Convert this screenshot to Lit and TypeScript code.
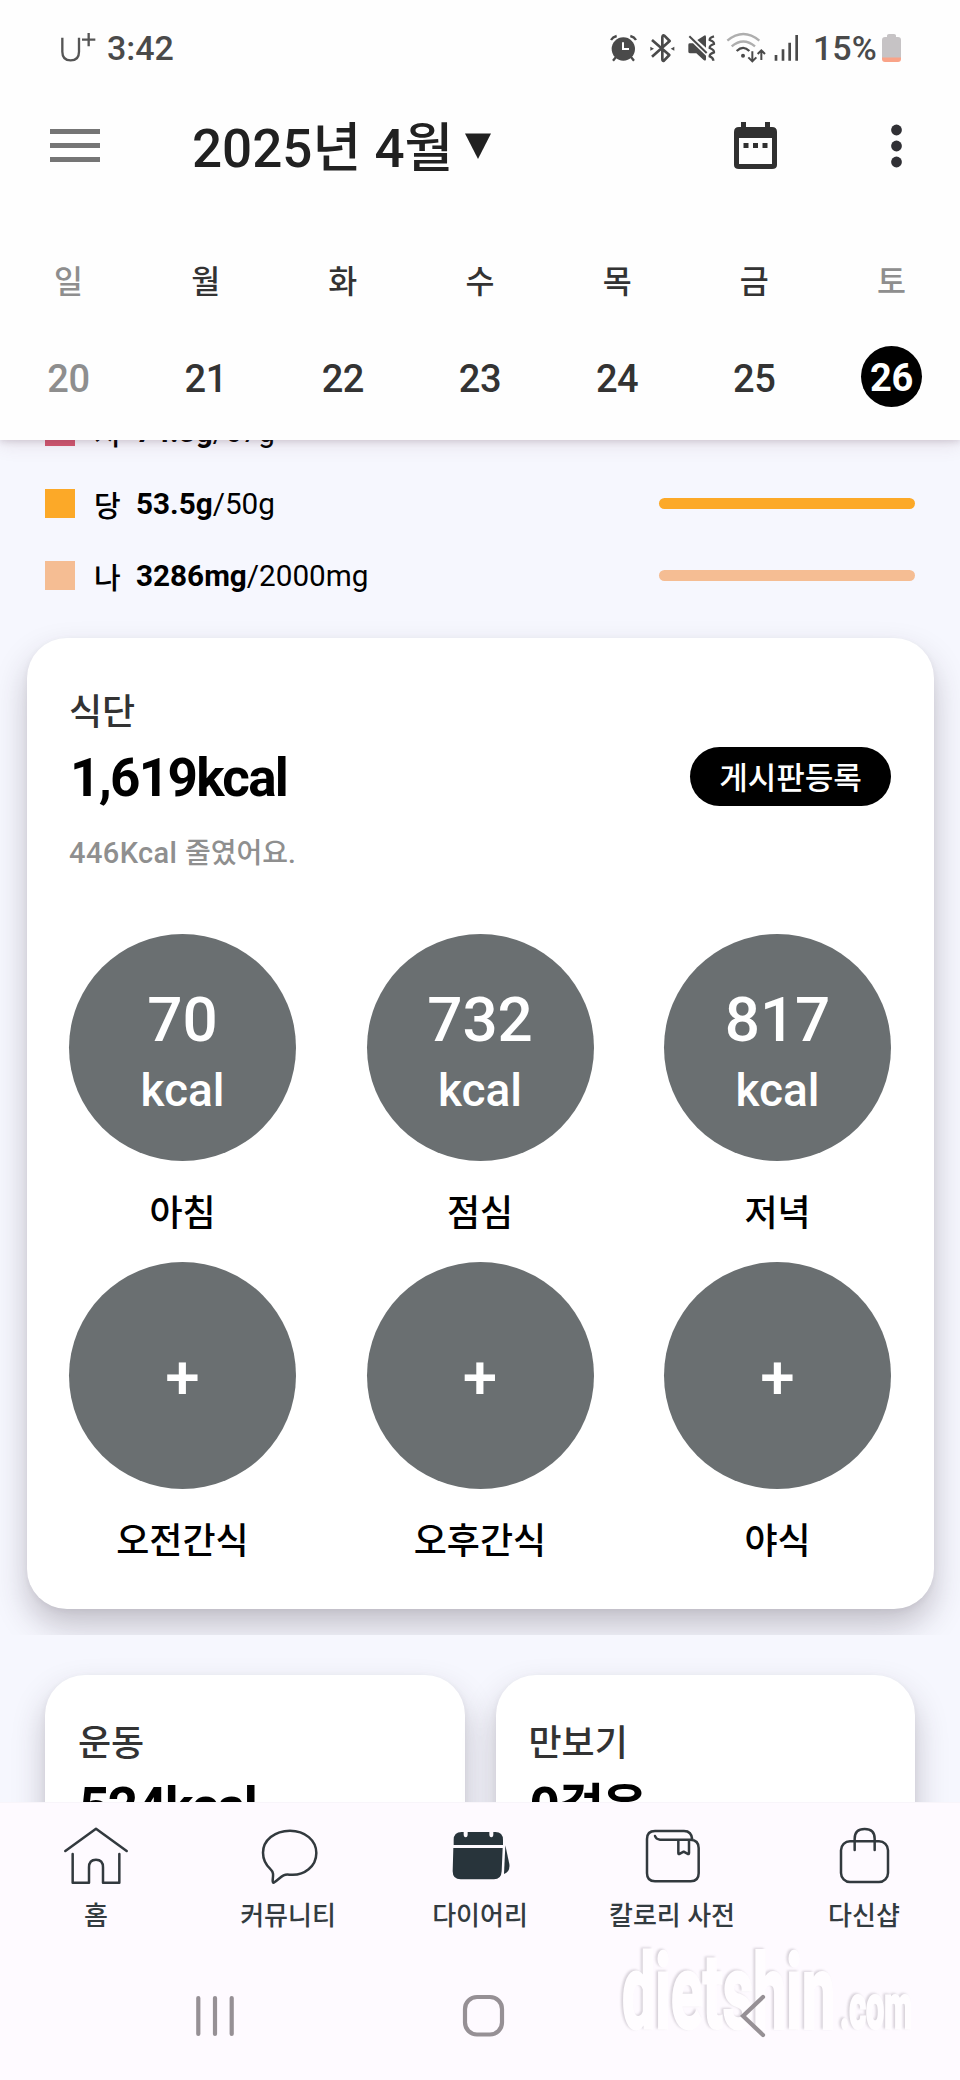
import { LitElement, html, svg, css } from "lit";
import { customElement } from "lit/decorators.js";
import { classMap } from "lit/directives/class-map.js";

interface Day { name: string; date: number; state?: string }
interface Nutrient { key: string; label: string; value: string; goal: string }
interface Meal { label: string; kcal?: number }

const DAYS: Day[] = [
  { name: "일", date: 20, state: "muted" },
  { name: "월", date: 21 },
  { name: "화", date: 22 },
  { name: "수", date: 23 },
  { name: "목", date: 24 },
  { name: "금", date: 25 },
  { name: "토", date: 26, state: "today" },
];

const NUTRIENTS: Nutrient[] = [
  { key: "fat", label: "지", value: "74.3g", goal: "/67g" },
  { key: "sugar", label: "당", value: "53.5g", goal: "/50g" },
  { key: "sodium", label: "나", value: "3286mg", goal: "/2000mg" },
];

const MEALS: Meal[] = [
  { label: "아침", kcal: 70 },
  { label: "점심", kcal: 732 },
  { label: "저녁", kcal: 817 },
  { label: "오전간식" },
  { label: "오후간식" },
  { label: "야식" },
];

const TABS = [
  {
    label: "홈",
    box: "192 132 192 186",
    art: svg`<path d="M196 213 288 146 380 213M218 222V308H267V262Q267 239 288 239T309 262V308H358V222"/>`,
  },
  {
    label: "커뮤니티",
    box: "768 132 192 186",
    art: svg`<path d="M870 152C915 152 949 181 949 219C949 258 914 289 868 284C848 281 842 294 823 307C819 310 818 306 818 301C820 285 821 276 812 268C797 254 789 240 789 218C789 181 824 152 870 152Z"/>`,
  },
  {
    label: "다이어리",
    box: "-96 132 192 186",
    art: svg`<g class="solid"><path d="M-79 195V180Q-79 156 -55 156H-49V163Q-49 172 -43 172T-37 163V156H28V163Q28 172 34 172T40 163V156H46Q69 156 69 180V195Z"/><path d="M-80 204H68L65 274Q64 298 42 298H-58Q-82 298 -82 274Z"/><path d="M76 196 88 252Q91 275 72 282Z"/></g>`,
  },
  {
    label: "칼로리 사전",
    box: "480 132 192 186",
    art: svg`<path d="M525 168Q528 178 540 179H631Q656 180 656 204V280Q656 304 632 304H525Q501 304 501 280V177Q501 153 525 153H612Q635 153 637 179M595 180V219Q595 224 600 221L611 215L622 221Q627 224 627 219V180"/>`,
  },
  {
    label: "다신샵",
    box: "1056 132 192 186",
    art: svg`<rect x="1083" y="184" width="141" height="122" rx="27"/><path d="M1124 210V176Q1124 147 1154 147T1184 176V210"/>`,
  },
];

@customElement("app-root")
export class AppRoot extends LitElement {
  static styles = css`
    :host {
      display: flex;
      flex-direction: column;
      width: 960px;
      height: 2080px;
      overflow: hidden;
      background: #f6f7fe;
      color: #000;
      font-family: Roboto, "Noto Sans CJK KR", sans-serif;
      font-weight: 500;
    }
    * { box-sizing: border-box; }
    svg { display: block; flex: none; }
    .header {
      position: relative;
      z-index: 2;
      flex: none;
      height: 440px;
      background: #fefefe;
      box-shadow: 0 2px 6px rgba(90, 60, 80, 0.16), 0 4px 18px rgba(120, 70, 90, 0.14);
    }
    .status {
      display: flex;
      align-items: center;
      height: 96px;
      padding: 0 59px 0 60px;
      color: #4a4a4a;
      font-size: 34px;
      line-height: 96px;
    }
    .carrier { margin-right: 10px; }
    .clock { flex: 1; }
    .percent { margin-left: 13px; width: 69px; }
    .toolbar {
      display: flex;
      align-items: center;
      height: 100px;
      padding: 0 58px 0 50px;
    }
    .title {
      margin: 0 12px 0 92px;
      color: #212121;
      font-size: 53px;
      font-weight: 500;
      line-height: 100px;
      padding-top: 5px;
      white-space: nowrap;
    }
    .calendar { margin-left: auto; margin-right: 114px; }
    .week {
      display: grid;
      grid-template-columns: repeat(7, 1fr);
      padding-top: 67px;
      color: #333;
      text-align: center;
    }
    .day { display: flex; flex-direction: column; align-items: center; }
    .day-name { height: 40px; font-size: 31.5px; line-height: 40px; }
    .date {
      width: 61px;
      height: 61px;
      margin-top: 43px;
      border-radius: 50%;
      font-size: 38px;
      letter-spacing: -0.4px;
      line-height: 67px;
    }
    .muted, .today .day-name { color: #8e8e8e; }
    .today .date { background: #000; color: #fff; font-weight: 700; line-height: 65px; }
    .content { flex: none; height: 1362px; overflow: hidden; }
    .nutrients { margin-top: -44px; padding: 0 45px; }
    .nutrient {
      display: flex;
      align-items: center;
      height: 72px;
      padding-bottom: 1px;
      font-size: 29.7px;
      font-weight: 400;
    }
    .swatch { width: 30px; height: 29px; margin-right: 19px; }
    .nutrient-label { width: 42px; font-size: 29px; font-weight: 500; }
    .nutrient b { font-weight: 700; }
    .bar { width: 256px; height: 11px; margin: 0 0 1px auto; border-radius: 6px; }
    .fat { background: #d3556f; }
    .sugar { background: #fca928; }
    .sodium { background: #f5bd93; }
    .diet { overflow: hidden; padding: 25.5px 26.5px 26.5px; }
    .card {
      background: #fff;
      border-radius: 40px;
      box-shadow: 0 17px 32px rgba(50, 40, 54, 0.26), 0 2px 6px rgba(50, 38, 54, 0.06);
    }
    .diet-card { padding: 55.5px 42.5px 47px; }
    .card-title {
      height: 40px;
      color: #333;
      font-size: 36px;
      font-weight: 500;
      line-height: 40px;
    }
    .total {
      padding: 4px 0 0 1px;
      font-size: 53px;
      font-weight: 700;
      letter-spacing: -1.7px;
      line-height: 59px;
      white-space: nowrap;
    }
    .total-row {
      display: flex;
      align-items: center;
      justify-content: space-between;
      height: 59px;
      margin-top: 14px;
    }
    .post {
      width: 201px;
      height: 59px;
      border-radius: 30px;
      background: #000;
      color: #fff;
      font-size: 31px;
      line-height: 64px;
      text-align: center;
    }
    .note {
      height: 40px;
      margin-top: 27px;
      color: #8f8f8f;
      font-size: 29px;
      letter-spacing: 0.4px;
      line-height: 40px;
    }
    .note-text { font-size: 28px; letter-spacing: 0; }
    .meals {
      display: grid;
      grid-template-columns: repeat(3, 227px);
      justify-content: space-between;
      row-gap: 28px;
      margin-top: 60.5px;
      text-align: center;
    }
    .meal-circle {
      display: flex;
      flex-direction: column;
      justify-content: center;
      height: 227px;
      padding-top: 15px;
      border-radius: 50%;
      background: #6a6f71;
      color: #fff;
    }
    .amount { font-size: 62px; line-height: 70px; }
    .unit { font-size: 46px; line-height: 70px; }
    .empty { padding-top: 3px; }
    .meal-label { height: 40px; margin-top: 33px; font-size: 36px; line-height: 40px; }
    .pair {
      display: grid;
      grid-template-columns: 1fr 1fr;
      gap: 31px;
      padding: 40px 45px 0;
    }
    .small-card { height: 300px; padding: 49px 33px; }
    .small-card .total { margin-top: 9px; padding: 5px 0 0 1px; }
    .count-unit { font-size: 50px; letter-spacing: -2.4px; }
    .footer { flex: 1; background: #fefaff; border-top: 1px solid #f8f5fa; }
    .tabs { display: grid; grid-template-columns: repeat(5, 1fr); padding-top: 21px; }
    .tab {
      display: flex;
      flex-direction: column;
      align-items: center;
      color: #333b40;
      font-size: 26px;
      line-height: 40px;
    }
    .tab-icon {
      margin-bottom: 10px;
      fill: none;
      stroke: #32393e;
      stroke-width: 7.5;
      stroke-linecap: round;
      stroke-linejoin: round;
    }
    .solid { fill: #28343b; stroke: none; }
    .system { margin-top: 8px; }
    .keys { fill: none; stroke: #969095; stroke-width: 4.2; stroke-linecap: round; }
    .mark {
      fill: #fffdff;
      stroke: #fffdff;
      stroke-width: 3;
      font-family: Roboto, sans-serif;
      font-weight: 700;
      filter: drop-shadow(-1.5px -0.5px 1px rgba(80, 75, 85, 0.22));
    }
  `;

  private renderStatus() {
    return html`
      <div class="status">
        <svg class="carrier" width="37" height="32" viewBox="181 95 111 96" fill="none" stroke="#555" stroke-width="7">
          <path d="M188 112V154Q188 180 213 180T238 154V112M247 118H287M267 98V138" />
        </svg>
        <span class="clock">3:42</span>
        <svg width="190" height="32" viewBox="150 95 570 96" fill="none" stroke="#4a4a4a" stroke-width="7">
          <circle cx="190" cy="146" r="35" fill="#4a4a4a" stroke="none" />
          <path d="M153 119Q158 110 170 107M228 119Q223 110 211 107M168 170 159 181M213 170 222 181" />
          <path d="M189 126V146H207" stroke="#fff" stroke-width="6" />
          <path d="M276 119 328 164 312 181Q307 183 307 176V112Q307 103 313 106L329 122 276 169" stroke-width="8" stroke-linejoin="round" />
          <path d="M271 139 282 145 271 151ZM343 139 332 145 343 151Z" fill="#4a4a4a" stroke="none" />
          <path d="M385 133Q385 129 390 129H399L438 166V176Q438 184 430 178L409 159H391Q385 159 385 154ZM412 119 432 106Q438 103 438 110V142Z" fill="#4a4a4a" stroke="none" />
          <path d="M388 108 440 158" stroke-width="6" />
          <path d="M462 108Q448 112 449 119Q463 124 462 131Q448 136 449 143Q463 149 462 156Q448 161 449 168Q460 172 460 181" stroke-width="7" />
          <path d="M502 121Q550 81 598 121M515 138Q550 109 585 138" stroke="#aeaeae" stroke-width="7" />
          <path d="M530 152Q550 133 568 152" stroke-width="7" />
          <circle cx="549" cy="166" r="6" fill="#4a4a4a" stroke="none" />
          <path d="M577 153V181M565 171 577 183 589 171M604 179V152M593 161 604 150 615 161" stroke-width="6" />
          <path d="M648 164V181M669 147V181M689 127V181M710 104V181" stroke-width="8" />
        </svg>
        <span class="percent">15%</span>
        <svg width="19" height="28" viewBox="0 0 19 28">
          <path d="M5 3V1.500Q5 0 7 0H12Q14 0 14 1.500V3H16Q19 3 19 6V24H0V6Q0 3 3 3Z" fill="#c6c3c5" />
          <path d="M0 23.500H19V25Q19 28 16 28H3Q0 28 0 25Z" fill="#f9a388" />
        </svg>
      </div>`;
  }

  private renderHeader() {
    return html`
      <header class="header">
        ${this.renderStatus()}
        <div class="toolbar">
          <svg width="50" height="34" viewBox="0 0 50 34" fill="#757575">
            <path d="M0 0H50V5H0ZM0 14H50V19H0ZM0 28H50V33H0Z" />
          </svg>
          <h1 class="title">2025년 4월</h1>
          <svg width="26" height="26" viewBox="0 0 26 26"><path d="M0 0.500H26L13 26Z" fill="#212121" /></svg>
          <svg class="calendar" width="43" height="48" viewBox="0 0 43 48">
            <path fill="#303030" fill-rule="evenodd" d="M7 0H12V5H31V0H36V5H38Q43 5 43 10V43Q43 47 38 47H5Q0 47 0 43V10Q0 5 5 5H7ZM5 16V42H38V16Z" />
            <path fill="#303030" d="M9.500 21H14.500V26H9.500ZM19 21H24V26H19ZM28.500 21H33.500V26H28.500Z" />
          </svg>
          <svg width="11" height="44" viewBox="0 0 11 44" fill="#303035">
            <circle cx="5.500" cy="6" r="5.400" /><circle cx="5.500" cy="22" r="5.400" /><circle cx="5.500" cy="38" r="5.400" />
          </svg>
        </div>
        <div class="week">
          ${DAYS.map((d) => html`
            <div class=${classMap({ day: true, muted: d.state === "muted", today: d.state === "today" })}>
              <span class="day-name">${d.name}</span>
              <span class="date">${d.date}</span>
            </div>`)}
        </div>
      </header>`;
  }

  private renderMeal(m: Meal) {
    return html`
      <div>
        <div class=${classMap({ "meal-circle": true, empty: m.kcal === undefined })}>
          ${m.kcal === undefined
            ? html`<span class="amount">+</span>`
            : html`<span class="amount">${m.kcal}</span><span class="unit">kcal</span>`}
        </div>
        <div class="meal-label">${m.label}</div>
      </div>`;
  }

  render() {
    return html`
      ${this.renderHeader()}
      <main class="content">
        <div class="nutrients">
          ${NUTRIENTS.map((n) => html`
            <div class="nutrient">
              <span class="swatch ${n.key}"></span>
              <span class="nutrient-label">${n.label}</span>
              <span><b>${n.value}</b>${n.goal}</span>
              <span class="bar ${n.key}"></span>
            </div>`)}
        </div>
        <section class="diet">
          <div class="card diet-card">
            <div class="card-title">식단</div>
            <div class="total-row">
              <span class="total">1,619kcal</span>
              <span class="post">게시판등록</span>
            </div>
            <div class="note">446Kcal <span class="note-text">줄였어요.</span></div>
            <div class="meals">${MEALS.map((m) => this.renderMeal(m))}</div>
          </div>
        </section>
        <section class="pair">
          <div class="card small-card">
            <div class="card-title">운동</div>
            <div class="total">524kcal</div>
          </div>
          <div class="card small-card">
            <div class="card-title">만보기</div>
            <div class="total">0<span class="count-unit">걸음</span></div>
          </div>
        </section>
      </main>
      <footer class="footer">
        <nav class="tabs">
          ${TABS.map((t) => html`
            <div class="tab">
              <svg class="tab-icon" width="64" height="62" viewBox=${t.box}>${t.art}</svg>
              <span>${t.label}</span>
            </div>`)}
        </nav>
        <svg class="system" width="960" height="136" viewBox="0 1944 960 136">
          <g class="mark">
            <text x="622" y="2028" font-size="104" textLength="213" lengthAdjust="spacingAndGlyphs">dietshin</text>
            <text x="840" y="2028" font-size="62" textLength="72" lengthAdjust="spacingAndGlyphs">.com</text>
          </g>
          <g class="keys">
            <path d="M198.300 1998V2034M215 1998V2034M231.700 1998V2034" />
            <rect x="465" y="1997" width="37" height="37.500" rx="12" />
            <path d="M763 1997 743 2016 763 2035" />
          </g>
        </svg>
      </footer>`;
  }
}
